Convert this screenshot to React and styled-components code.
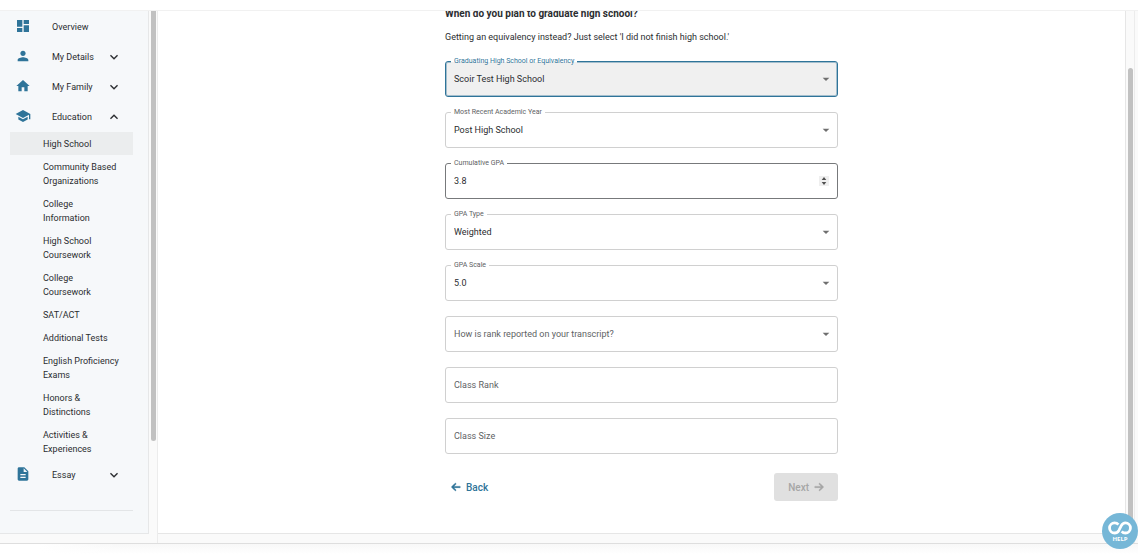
import React from 'react';
import styled, { createGlobalStyle } from 'styled-components';
import {
  MdDashboard,
  MdPerson,
  MdHome,
  MdSchool,
  MdDescription,
  MdExpandMore,
  MdExpandLess,
  MdArrowDropDown,
} from 'react-icons/md';
import { FaArrowLeft, FaArrowRight } from 'react-icons/fa6';

const GlobalStyle = createGlobalStyle`
  * {
    box-sizing: border-box;
  }

  body {
    margin: 0;
    background: #ffffff;
    color: #2b2d30;
    font-family: Roboto, 'Liberation Sans', sans-serif;
    font-size: 9px;
  }

  button,
  input,
  select {
    font: inherit;
    color: inherit;
  }
`;

const Page = styled.div`
  min-height: 100vh;
  padding-top: 10px;
  overflow: hidden;
`;

const Shell = styled.div`
  display: grid;
  grid-template-columns: 149px 9px minmax(0, 1fr) 9px 3px;
  background: #fafafa;
  border-top: 1px solid #f1f1f1;
  border-bottom: 1px solid #dedede;
`;

const Sidebar = styled.aside`
  margin-bottom: 9px;
  padding: 1px 15px 22px 10px;
  background: #f6f8fa;
  border-right: 1px solid #e6e7e8;
  border-bottom: 1px solid #e6e7e8;
`;

const Track = styled.div`
  display: flex;
  flex-direction: column;
  align-items: center;
  border-right: 1px solid #ececec;
`;

const Thumb = styled.div`
  width: 5px;
  height: calc(100% - ${({ $rest }) => $rest});
  margin-top: ${({ $end }) => ($end ? 'auto' : '0')};
  background: #c1c1c1;
  border-radius: ${({ $end }) => ($end ? '3px 3px 0 0' : '0 0 3px 3px')};
`;

const NavButton = styled.button`
  display: flex;
  align-items: center;
  width: 100%;
  height: 30px;
  padding: 0 5px;
  border: 0;
  background: none;
  text-align: left;
  cursor: pointer;
`;

const NavIcon = styled.span`
  display: flex;
  margin-right: 21px;
  padding-bottom: 2px;
  color: #2f7499;
  font-size: 16px;
`;

const NavChevron = styled.span`
  display: flex;
  font-size: 16px;
`;

const NavLabel = styled.span`
  width: 54px;
  white-space: nowrap;
`;

const SubList = styled.ul`
  margin: 0;
  padding: 0;
  list-style: none;
`;

const SubLink = styled.a`
  display: block;
  padding: 5px 13px 4px 33px;
  background: ${({ $active }) => ($active ? '#ebedee' : 'transparent')};
  color: inherit;
  line-height: 14px;
  text-decoration: none;
`;

const Divider = styled.hr`
  margin: 20px 0 0;
  border: 0;
  border-top: 1px solid #e3e5e7;
`;

const Main = styled.main`
  margin-bottom: 9px;
  padding: 0 16px 32px;
  overflow: hidden;
  background: #ffffff;
  border-right: 1px solid #e6e6e6;
  border-bottom: 1px solid #e6e6e6;
`;

const Form = styled.form`
  max-width: 393px;
  margin: -4px auto 0;
`;

const Title = styled.h1`
  margin: 0;
  font-size: 10px;
  font-weight: 700;
  line-height: 14px;
`;

const Intro = styled.p`
  margin: 9px 0 17px;
  line-height: 14px;
`;

const Fields = styled.div`
  display: grid;
  gap: 15px;
`;

const FieldBox = styled.div`
  position: relative;
  height: 36px;
`;

const Label = styled.label`
  position: absolute;
  left: ${({ $floating }) => ($floating ? '6px' : '9px')};
  top: ${({ $floating }) => ($floating ? '-4px' : '12px')};
  padding: 0 ${({ $floating }) => ($floating ? '3px' : '0')};
  background: ${({ $floating, $focused }) =>
    $floating
      ? `linear-gradient(#ffffff 60%, ${$focused ? '#f0f0f0' : '#ffffff'} 60%)`
      : 'none'};
  color: ${({ $focused }) => ($focused ? '#2f7499' : '#606264')};
  font-size: ${({ $floating }) => ($floating ? '7px' : '9px')};
  line-height: ${({ $floating }) => ($floating ? '9px' : '12px')};
  pointer-events: none;
`;

const borderColor = ({ $focused, $hovered }) => {
  if ($focused) return '#2f7499';
  return $hovered ? '#77797b' : '#d0d0d0';
};

const Select = styled.select`
  display: block;
  width: 100%;
  height: 100%;
  padding: 0 24px 0 8px;
  appearance: none;
  background: ${({ $focused }) => ($focused ? '#f0f0f0' : '#ffffff')};
  border: 1px solid ${borderColor};
  border-radius: 3px;
  box-shadow: ${({ $focused }) => ($focused ? 'inset 0 0 0 1px #2f749966' : 'none')};
  outline: none;
`;

const Input = styled.input`
  display: block;
  width: 100%;
  height: 100%;
  padding: 0 24px 0 8px;
  appearance: textfield;
  background: #ffffff;
  border: 1px solid ${borderColor};
  border-radius: 3px;
  outline: none;

  &::-webkit-inner-spin-button {
    display: none;
  }
`;

const Caret = styled(MdArrowDropDown)`
  position: absolute;
  right: 4px;
  top: 10px;
  color: #6f6f6f;
  font-size: 16px;
  pointer-events: none;
`;

const Stepper = styled.svg`
  position: absolute;
  right: 9px;
  top: 13px;
  width: 10px;
  height: 10px;
  background: #efefef;
  fill: #505050;
  pointer-events: none;
`;

const Actions = styled.div`
  display: flex;
  justify-content: space-between;
  margin-top: 19px;
`;

const ActionButton = styled.button`
  display: flex;
  align-items: center;
  justify-content: center;
  gap: 5px;
  height: 28px;
  padding: 0 ${({ $filled }) => ($filled ? '14px' : '6px')};
  background: ${({ $filled }) => ($filled ? '#e0e0e0' : 'transparent')};
  border: 0;
  border-radius: 3px;
  color: ${({ $filled }) => ($filled ? '#a6a6a6' : '#2f7499')};
  font-size: 10px;
  font-weight: 500;

  svg {
    stroke-width: 28px;
  }
`;

const PageShadow = styled.div`
  height: 10px;
  background: linear-gradient(90deg, #ffffff 40px, transparent 120px),
    linear-gradient(#f8f8f8, #ffffff);
`;

const HelpButton = styled.button`
  position: fixed;
  right: 0;
  bottom: 5px;
  display: flex;
  flex-direction: column;
  align-items: center;
  justify-content: center;
  width: 36px;
  height: 36px;
  padding: 2px 0 0;
  background: #76b7d7;
  border: 0;
  border-radius: 50%;
  color: #ffffff;
  font-family: 'Open Sans', sans-serif;
  font-size: 6px;
  font-weight: 700;
  line-height: 8px;
`;

const subItems = [
  'High School',
  'Community Based Organizations',
  'College Information',
  'High School Coursework',
  'College Coursework',
  'SAT/ACT',
  'Additional Tests',
  'English Proficiency Exams',
  'Honors & Distinctions',
  'Activities & Experiences',
];

function NavItem({ icon: Icon, label, open, expandable = true }) {
  const Chevron = open ? MdExpandLess : MdExpandMore;
  return (
    <NavButton type="button" aria-expanded={expandable ? Boolean(open) : undefined}>
      <NavIcon>
        <Icon />
      </NavIcon>
      <NavLabel>{label}</NavLabel>
      {expandable && (
        <NavChevron>
          <Chevron />
        </NavChevron>
      )}
    </NavButton>
  );
}

function SelectField({ id, label, value, focused }) {
  return (
    <FieldBox>
      <Select id={id} defaultValue={value || ''} $focused={focused}>
        <option value={value || ''}>{value || ''}</option>
      </Select>
      <Label htmlFor={id} $floating={Boolean(value)} $focused={focused}>
        {label}
      </Label>
      <Caret />
    </FieldBox>
  );
}

function NumberField({ id, label, value, hovered }) {
  return (
    <FieldBox>
      <Input id={id} type="number" step="any" defaultValue={value} $hovered={hovered} />
      <Label htmlFor={id} $floating={Boolean(value)}>
        {label}
      </Label>
      {hovered && (
        <Stepper viewBox="0 0 10 10" aria-hidden="true">
          <path d="M5 1 7.3 4H2.7zM5 9 2.7 6h4.6z" />
        </Stepper>
      )}
    </FieldBox>
  );
}

function HelpLogo() {
  return (
    <svg width="24" height="14" viewBox="0 0 24 14" fill="none" stroke="#ffffff" strokeWidth="2.8" aria-hidden="true">
      <path d="M10.4 3.6C9.4 2.4 8.1 1.9 6.6 1.9A5 5 0 0 0 6.6 12C8.6 12 9.9 11 10.9 9.4L13.3 4.7C14.2 3 15.6 1.9 17.4 1.9A5 5 0 0 1 17.4 12C15.9 12 14.6 11.4 13.7 10.3" />
    </svg>
  );
}

function App() {
  return (
    <Page>
      <GlobalStyle />
      <Shell>
        <Sidebar>
          <nav aria-label="Profile sections">
            <NavItem icon={MdDashboard} label="Overview" expandable={false} />
            <NavItem icon={MdPerson} label="My Details" />
            <NavItem icon={MdHome} label="My Family" />
            <NavItem icon={MdSchool} label="Education" open />
            <SubList>
              {subItems.map((item, index) => (
                <li key={item}>
                  <SubLink href="#section" $active={index === 0}>
                    {item}
                  </SubLink>
                </li>
              ))}
            </SubList>
            <NavItem icon={MdDescription} label="Essay" />
          </nav>
          <Divider />
        </Sidebar>
        <Track>
          <Thumb $rest="102px" />
        </Track>
        <Main>
          <Form>
            <Title>When do you plan to graduate high school?</Title>
            <Intro>Getting an equivalency instead? Just select 'I did not finish high school.'</Intro>
            <Fields>
              <SelectField
                id="school"
                label="Graduating High School or Equivalency"
                value="Scoir Test High School"
                focused
              />
              <SelectField id="year" label="Most Recent Academic Year" value="Post High School" />
              <NumberField id="gpa" label="Cumulative GPA" value="3.8" hovered />
              <SelectField id="gpa-type" label="GPA Type" value="Weighted" />
              <SelectField id="gpa-scale" label="GPA Scale" value="5.0" />
              <SelectField id="rank-type" label="How is rank reported on your transcript?" />
              <NumberField id="rank" label="Class Rank" />
              <NumberField id="size" label="Class Size" />
            </Fields>
            <Actions>
              <ActionButton type="button">
                <FaArrowLeft />
                Back
              </ActionButton>
              <ActionButton type="submit" $filled disabled>
                Next
                <FaArrowRight />
              </ActionButton>
            </Actions>
          </Form>
        </Main>
        <Track>
          <Thumb $rest="57px" $end />
        </Track>
      </Shell>
      <PageShadow />
      <HelpButton type="button">
        <HelpLogo />
        HELP
      </HelpButton>
    </Page>
  );
}

export default App;
